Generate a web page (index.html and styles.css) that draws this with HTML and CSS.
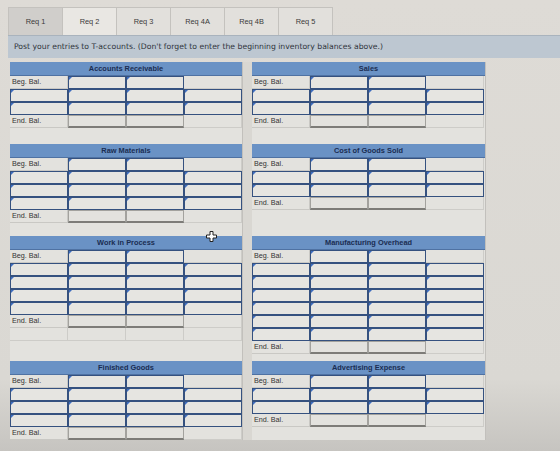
FILE: index.html
```html
<!DOCTYPE html>
<html lang="en">
<head>
<meta charset="utf-8">
<title>T-accounts</title>
<link rel="stylesheet" href="styles.css">
</head>
<body>
<div class="page">
  <nav class="tabs">
    <div class="tab tab-dim">Req 1</div>
    <div class="tab tab-active">Req 2</div>
    <div class="tab">Req 3</div>
    <div class="tab">Req 4A</div>
    <div class="tab">Req 4B</div>
    <div class="tab">Req 5</div>
  </nav>
  <div class="note">Post your entries to T-accounts. (Don't forget to enter the beginning inventory balances above.)</div>

  <div class="ledger">
    <!-- row 1 -->
    <section class="acct">
      <div class="acct-head">Accounts Receivable</div>
      <div class="t-grid">
        <div class="lbl">Beg. Bal.</div><div class="in"></div><div class="in"></div><div class="cell"></div>
        <div class="in"></div><div class="in"></div><div class="in"></div><div class="in"></div>
        <div class="in"></div><div class="in"></div><div class="in"></div><div class="in"></div>
        <div class="lbl">End. Bal.</div><div class="tot"></div><div class="tot"></div><div class="cell"></div>
      </div>
    </section>
    <section class="acct">
      <div class="acct-head">Sales</div>
      <div class="t-grid">
        <div class="lbl">Beg. Bal.</div><div class="in"></div><div class="in"></div><div class="cell"></div>
        <div class="in"></div><div class="in"></div><div class="in"></div><div class="in"></div>
        <div class="in"></div><div class="in"></div><div class="in"></div><div class="in"></div>
        <div class="lbl">End. Bal.</div><div class="tot"></div><div class="tot"></div><div class="cell"></div>
      </div>
    </section>

    <!-- row 2 -->
    <section class="acct">
      <div class="acct-head">Raw Materials</div>
      <div class="t-grid">
        <div class="lbl">Beg. Bal.</div><div class="in"></div><div class="in"></div><div class="cell"></div>
        <div class="in"></div><div class="in"></div><div class="in"></div><div class="in"></div>
        <div class="in"></div><div class="in"></div><div class="in"></div><div class="in"></div>
        <div class="in"></div><div class="in"></div><div class="in"></div><div class="in"></div>
        <div class="lbl">End. Bal.</div><div class="tot"></div><div class="tot"></div><div class="cell"></div>
      </div>
    </section>
    <section class="acct">
      <div class="acct-head">Cost of Goods Sold</div>
      <div class="t-grid">
        <div class="lbl">Beg. Bal.</div><div class="in"></div><div class="in"></div><div class="cell"></div>
        <div class="in"></div><div class="in"></div><div class="in"></div><div class="in"></div>
        <div class="in"></div><div class="in"></div><div class="in"></div><div class="in"></div>
        <div class="lbl">End. Bal.</div><div class="tot"></div><div class="tot"></div><div class="cell"></div>
      </div>
    </section>

    <!-- row 3 -->
    <section class="acct">
      <div class="acct-head">Work in Process</div>
      <div class="t-grid">
        <div class="lbl">Beg. Bal.</div><div class="in"></div><div class="in"></div><div class="cell"></div>
        <div class="in"></div><div class="in"></div><div class="in"></div><div class="in"></div>
        <div class="in"></div><div class="in"></div><div class="in"></div><div class="in"></div>
        <div class="in"></div><div class="in"></div><div class="in"></div><div class="in"></div>
        <div class="in"></div><div class="in"></div><div class="in"></div><div class="in"></div>
        <div class="lbl">End. Bal.</div><div class="tot"></div><div class="tot"></div><div class="cell"></div>
        <div class="cell"></div><div class="cell"></div><div class="cell"></div><div class="cell"></div>
      </div>
    </section>
    <section class="acct">
      <div class="acct-head">Manufacturing Overhead</div>
      <div class="t-grid">
        <div class="lbl">Beg. Bal.</div><div class="in"></div><div class="in"></div><div class="cell"></div>
        <div class="in"></div><div class="in"></div><div class="in"></div><div class="in"></div>
        <div class="in"></div><div class="in"></div><div class="in"></div><div class="in"></div>
        <div class="in"></div><div class="in"></div><div class="in"></div><div class="in"></div>
        <div class="in"></div><div class="in"></div><div class="in"></div><div class="in"></div>
        <div class="in"></div><div class="in"></div><div class="in"></div><div class="in"></div>
        <div class="in"></div><div class="in"></div><div class="in"></div><div class="in"></div>
        <div class="lbl">End. Bal.</div><div class="tot"></div><div class="tot"></div><div class="cell"></div>
      </div>
    </section>

    <!-- row 4 -->
    <section class="acct">
      <div class="acct-head">Finished Goods</div>
      <div class="t-grid">
        <div class="lbl">Beg. Bal.</div><div class="in"></div><div class="in"></div><div class="cell"></div>
        <div class="in"></div><div class="in"></div><div class="in"></div><div class="in"></div>
        <div class="in"></div><div class="in"></div><div class="in"></div><div class="in"></div>
        <div class="in"></div><div class="in"></div><div class="in"></div><div class="in"></div>
        <div class="lbl">End. Bal.</div><div class="tot"></div><div class="tot"></div><div class="cell"></div>
      </div>
    </section>
    <section class="acct">
      <div class="acct-head">Advertising Expense</div>
      <div class="t-grid">
        <div class="lbl">Beg. Bal.</div><div class="in"></div><div class="in"></div><div class="cell"></div>
        <div class="in"></div><div class="in"></div><div class="in"></div><div class="in"></div>
        <div class="in"></div><div class="in"></div><div class="in"></div><div class="in"></div>
        <div class="lbl">End. Bal.</div><div class="tot"></div><div class="tot"></div><div class="cell"></div>
      </div>
    </section>
  </div>

  <!-- move cursor hovering over the sheet -->
  <svg class="cursor" width="11" height="11" viewBox="0 0 11 11" aria-hidden="true">
    <path d="M4 0.5h3v3.5h3.5v3H7v3.5H4V7H0.5V4H4z" fill="#fff" stroke="#222" stroke-width="1"/>
  </svg>
</div>
</body>
</html>
```
FILE: styles.css
```css
* { box-sizing: border-box; }

html, body {
  margin: 0;
  height: 100%;
}

body {
  background: linear-gradient(#dedbd6 0%, #dad8d3 84%, #c6c4c0 100%);
  font-family: "Liberation Sans", Arial, sans-serif;
  color: #333;
  overflow: hidden;
}

.page {
  position: relative;
  padding: 7px 0 0 8px;
}

/* requirement tabs */
.tabs {
  display: flex;
  height: 28px;
}

.tab {
  width: 55px;
  border: 1px solid #c4c2be;
  border-bottom: none;
  margin-right: -1px;
  background: #e2e0dc;
  font-size: 7.4px;
  color: #3a3a3a;
  text-align: center;
  line-height: 27px;
}

.tab-dim { background: #d0cecb; }
.tab-active { background: #e9e7e3; }

.note {
  height: 23px;
  background: #bdc7d1;
  border-top: 1px solid #a9b3bd;
  font-family: "DejaVu Sans", Verdana, sans-serif;
  font-size: 7.7px;
  color: #2f343c;
  line-height: 22px;
  padding-left: 6px;
  white-space: nowrap;
}

/* two columns of T-accounts */
.ledger {
  display: grid;
  grid-template-columns: 233px 234px;
  grid-template-rows: 82px 92px 125px 79px;
  column-gap: 9px;
  margin: 4px 0 0 2px;
  width: 476px;
  background: #d9d7d2;
}

.acct {
  background: #e3e2de;
  border-right: 1px solid #c2c0bc;
}

.acct-head {
  height: 14px;
  background: #6a92c5;
  border-bottom: 1px solid #4f72a3;
  color: #1a2d52;
  font-weight: bold;
  font-size: 7.4px;
  line-height: 13px;
  text-align: center;
}

.t-grid {
  display: grid;
  grid-template-columns: 58px 58px 58px 58px;
  grid-auto-rows: 13px;
}

.lbl {
  border-right: 1px solid #c9c8c4;
  border-bottom: 1px solid #c9c8c4;
  font-size: 7.2px;
  line-height: 12px;
  padding-left: 2px;
  color: #333;
}

.cell {
  border-right: 1px solid #cdccc8;
  border-bottom: 1px solid #cdccc8;
}

.in {
  position: relative;
  background: #e6e5e1;
  border: 1.5px solid #35517f;
}

/* small entry marker in the corner of each input */
.in::before {
  content: "";
  position: absolute;
  left: 0;
  top: 0;
  border-top: 3px solid #3d6dc0;
  border-right: 3px solid transparent;
}

.tot {
  border: 1px solid #a3a29e;
  border-bottom: 2px solid #7d7c78;
}

.cursor {
  position: absolute;
  left: 206px;
  top: 231px;
}
```
